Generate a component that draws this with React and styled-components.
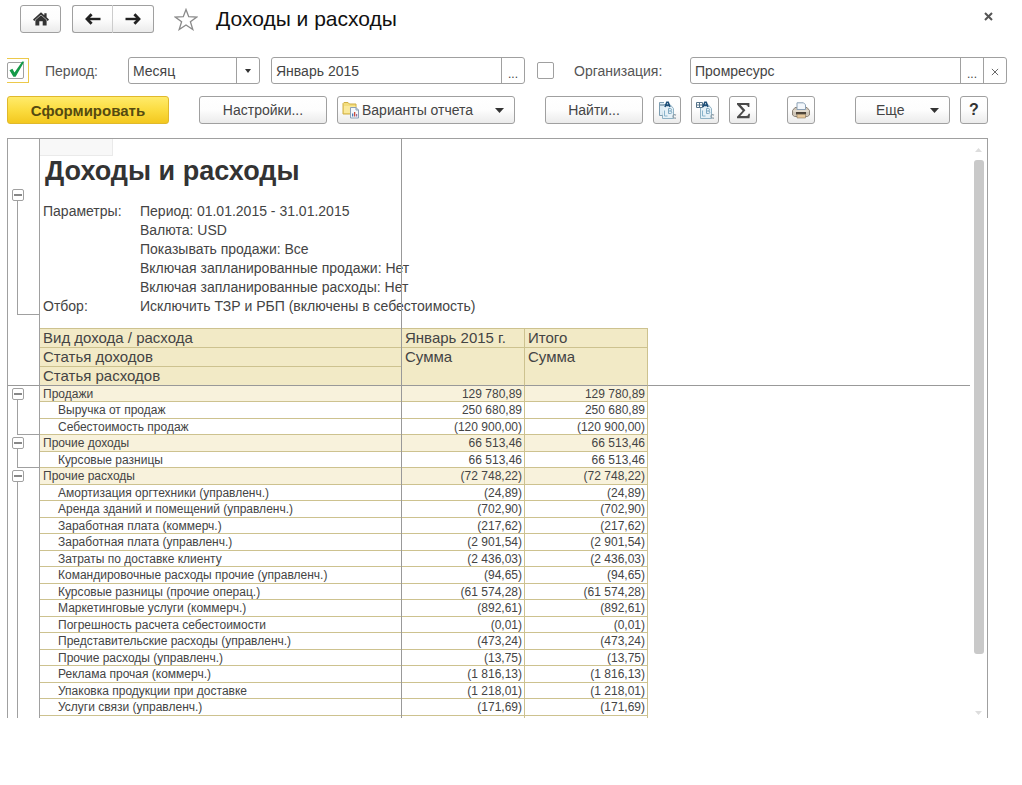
import React from "react";
import styled, { createGlobalStyle, css } from "styled-components";

const GlobalStyle = createGlobalStyle`
  *, *::before, *::after { box-sizing: border-box; }
  body {
    margin: 0;
    background: #fff;
    color: #444;
    font-family: "Liberation Sans", Arial, sans-serif;
    font-size: 14px;
  }
  button, input, select { font: inherit; color: inherit; }
`;

const LINE = "#a0a0a0";
const TAN = "#cdc28f";

const Page = styled.main`
  padding: 5px 0 0 7px;
`;

const Header = styled.header`
  display: flex;
  align-items: center;
  height: 28px;
  padding: 0 29px 0 13px;
`;

const buttonFace = css`
  border: 1px solid ${LINE};
  border-radius: 3px;
  background: linear-gradient(#fff, #fdfdfd 50%, #ebebeb);
  cursor: pointer;
`;

const NavButton = styled.button`
  ${buttonFace}
  display: flex;
  align-items: center;
  justify-content: center;
  width: 41px;
  height: 28px;
  padding: 0;
`;

const NavGroup = styled.nav`
  display: flex;
  margin: 0 20px 0 11px;
  ${NavButton}:first-child { border-radius: 3px 0 0 3px; border-right-color: #ccc; }
  ${NavButton}:last-child { border-radius: 0 3px 3px 0; border-left: 0; }
`;

const PlainButton = styled.button`
  display: flex;
  align-items: center;
  justify-content: center;
  padding: 0;
  border: 0;
  background: none;
  cursor: pointer;
`;

const CloseButton = styled(PlainButton)`
  align-self: flex-start;
  height: 22px;
`;

const Title = styled.h1`
  flex: 1;
  margin: 0 0 0 18px;
  color: #111;
  font-size: 21px;
  font-weight: 400;
  line-height: 28px;
`;

const Filters = styled.form`
  display: flex;
  align-items: center;
  height: 27px;
  margin: 24px 15px 0 0;
`;

const FocusFrame = styled.span`
  display: flex;
  align-items: center;
  width: 22px;
  height: 25px;
  border: 1px solid #ecc94b;
  border-left: 0;
`;

const CheckBox = styled.span`
  display: grid;
  width: 17px;
  height: 17px;
  flex: none;
  input {
    grid-area: 1 / 1;
    width: 17px;
    height: 17px;
    margin: 0;
    appearance: none;
    border: 1px solid ${LINE};
    border-radius: 2px;
    background: #fff;
  }
  svg {
    grid-area: 1 / 1;
    pointer-events: none;
    overflow: visible;
  }
`;

const Label = styled.label`
  width: ${(p) => p.$width}px;
  margin-left: ${(p) => p.$gap}px;
  flex: none;
  color: #555;
  white-space: nowrap;
`;

const Field = styled.div`
  display: flex;
  flex: ${(p) => p.$grow} 1 0;
  min-width: 0;
  height: 27px;
  margin-right: ${(p) => p.$after || 0}px;
  border: 1px solid ${LINE};
  border-radius: 3px;
  overflow: hidden;
  background: #fff;
  input {
    flex: 1;
    min-width: 0;
    padding: 0 4px;
    border: 0;
    outline: 0;
    background: none;
  }
`;

const FieldButton = styled.button`
  width: 23px;
  padding: ${(p) => (p.$dots ? "6px 0 0" : "3px 0 0")};
  border: 0;
  border-left: 1px solid ${LINE};
  background: none;
  font-size: 12px;
  cursor: pointer;
`;

const SelectBox = styled.div`
  display: grid;
  grid-template-columns: 1fr 23px;
  flex: none;
  width: 132px;
  height: 27px;
  margin-right: 11px;
  border: 1px solid ${LINE};
  border-radius: 3px;
  select {
    grid-area: 1 / 1 / 2 / 3;
    appearance: none;
    padding: 0 4px;
    border: 0;
    outline: 0;
    background: none;
  }
`;

const SelectArrow = styled.span`
  grid-area: 1 / 2;
  display: flex;
  align-items: center;
  justify-content: center;
  border-left: 1px solid ${LINE};
  pointer-events: none;
`;

const Toolbar = styled.div`
  display: flex;
  gap: 30px;
  margin: 12px 34px 14px 0;
`;

const ToolGroup = styled.div`
  display: flex;
  gap: 10px;
  &:last-child { margin-left: auto; }
`;

const ToolButton = styled.button`
  ${buttonFace}
  display: flex;
  align-items: center;
  justify-content: ${(p) => (p.$spread ? "space-between" : "center")};
  width: ${(p) => p.$width || 28}px;
  height: 28px;
  padding: ${(p) => (p.$spread ? `0 10px 0 ${p.$spread}px` : 0)};
  white-space: nowrap;
`;

const PrimaryButton = styled(ToolButton)`
  border-color: #e0b92c;
  background: linear-gradient(#ffeb6b, #fbdc40 50%, #f3c81f);
  color: #554a10;
  font-size: 15px;
  font-weight: 700;
`;

const IconLabel = styled.span`
  display: flex;
  align-items: center;
  gap: 2px;
`;

const HelpMark = styled.span`
  color: #333;
  font-size: 16px;
  font-weight: 700;
`;

const Sheet = styled.section`
  display: flex;
  margin-right: 34px;
  border: 1px solid ${LINE};
  border-bottom: 0;
`;

const Report = styled.div`
  position: relative;
  flex: 1;
  min-width: 0;
`;

const FreezeLine = styled.div`
  position: absolute;
  top: 0;
  bottom: 0;
  left: 393px;
  width: 1px;
  background: #999;
`;

const Intro = styled.div`
  display: grid;
  grid-template-columns: 32px 1fr;
`;

const Gutter = styled.div`
  display: flex;
  flex-direction: column;
  padding: 50px 0 13px;
  border-right: 1px solid ${LINE};
`;

const Bracket = styled.div`
  display: flex;
  flex-direction: column;
  flex: 1;
  height: ${(p) => (p.$height ? `${p.$height}px` : "auto")};
  padding-top: ${(p) => (p.$height ? 2 : 0)}px;
`;

const Toggle = styled.button`
  display: flex;
  align-items: center;
  justify-content: center;
  width: 12px;
  height: 12px;
  margin-left: 4px;
  padding: 0;
  flex: none;
  border: 1px solid ${LINE};
  border-radius: 2px;
  background: #fff;
  &::before {
    content: "";
    width: 8px;
    height: 2px;
    background: #888;
  }
`;

const Stem = styled.span`
  flex: 1;
  margin-left: 9px;
  border-left: 1px solid ${LINE};
  border-bottom: ${(p) => (p.$open ? 0 : 1)}px solid ${LINE};
`;

const IntroBody = styled.div`
  padding-bottom: 12px;
`;

const CornerCell = styled.div`
  width: 73px;
  height: 17px;
  border: solid #eaeaea;
  border-width: 0 1px 1px 0;
  background: #f8f8f8;
`;

const ReportTitle = styled.h2`
  margin: 0 0 16px 5px;
  color: #333;
  font-size: 27px;
  font-weight: 700;
  line-height: 30px;
`;

const Params = styled.dl`
  display: grid;
  grid-template-columns: 97px 1fr;
  margin: 0 0 0 3px;
  line-height: 19px;
  font-size: 14px;
  dt { grid-column: 1; }
  dd { grid-column: 2; margin: 0; white-space: nowrap; }
`;

const Table = styled.table`
  width: 100%;
  table-layout: fixed;
  border-collapse: separate;
  border-spacing: 0;
  line-height: 14px;
  td, th {
    padding: 0;
    overflow: hidden;
    text-align: left;
    vertical-align: middle;
    font-weight: 400;
    white-space: nowrap;
  }
`;

const Col = styled.col`
  width: ${(p) => (p.$width ? `${p.$width}px` : "auto")};
`;

const HeadRow = styled.tr`
  height: ${(p) => (p.$first ? 20 : 19)}px;
`;

const HeadCell = styled.th`
  && {
    padding-left: 3px;
    border: solid ${TAN};
    border-width: ${(p) => (p.$first ? 1 : 0)}px 1px 1px 0;
    border-bottom-color: ${(p) => (p.$frozen ? "#999" : TAN)};
    background: #f2eac6;
    font-size: 15px;
    line-height: 18px;
    vertical-align: top;
  }
`;

const BlankHead = styled.td`
  border-bottom: 1px solid #999;
  border-right: ${(p) => (p.$gutter ? 1 : 0)}px solid ${LINE};
`;

const GutterCell = styled.td`
  && { vertical-align: top; }
  border-right: 1px solid ${LINE};
`;

const Row = styled.tr`
  height: ${(p) => p.$height}px;
  background: ${(p) => (p.$group ? "#f8f2dc" : "#fff")};
  ${GutterCell} { background: #fff; }
`;

const NameCell = styled.td`
  && { padding-left: ${(p) => (p.$group ? 3 : 18)}px; }
  border-right: 1px solid ${TAN};
  border-bottom: 1px solid ${TAN};
  font-size: 12px;
`;

const SumCell = styled.td`
  && { padding-right: 2px; text-align: right; }
  border-right: 1px solid ${TAN};
  border-bottom: 1px solid ${TAN};
  font-size: 12px;
`;

const EdgeCell = styled.td`
  height: 2px;
  border-right: 1px solid ${TAN};
`;

const Filler = styled.td`
  background: #fff;
`;

const ScrollBar = styled.div`
  display: flex;
  flex-direction: column;
  align-items: center;
  width: 17px;
  padding: 9px 0 3px;
`;

const Thumb = styled.div`
  flex: 492 1 0;
  width: 10px;
  margin-top: 8px;
  border-radius: 3px;
  background: #c9c9c9;
`;

const Track = styled.div`
  flex: 57 1 0;
`;

const Triangle = ({ size = 9, color = "#333", up }) => (
  <svg width={size} height={size > 8 ? 5 : 4} viewBox="0 0 10 5" preserveAspectRatio="none" aria-hidden="true">
    <path d={up ? "M0 5 5 0 10 5z" : "M0 0H10L5 5z"} fill={color} />
  </svg>
);

const HomeIcon = () => (
  <svg width="16" height="14" viewBox="0 0 16 14" fill="#333" aria-hidden="true">
    <path d="M8 0.3 11.3 3.2V1.2H13.6V5.3L16 7.5 14.8 8.9 13.6 7.9V13.4H9.7V9.2H6.3V13.4H2.4V7.9L1.2 8.9 0 7.5z" />
    <path d="M2 8.2 8 3 14 8.2" fill="none" stroke="#f8f8f8" strokeWidth=".6" />
  </svg>
);

const ArrowIcon = ({ right }) => (
  <svg width="16" height="12" viewBox="0 0 16 12" aria-hidden="true">
    <g transform={right ? "matrix(-1 0 0 1 16 0)" : undefined} fill="none" stroke="#222">
      <path d="M2 6H15.5" strokeWidth="2.4" />
      <path d="M6.6 1.2 2 6l4.6 4.8" strokeWidth="2.8" />
    </g>
  </svg>
);

const StarIcon = () => (
  <svg width="24" height="23" viewBox="0 0 24 23" aria-hidden="true">
    <path
      d="M12 1.5 14.7 8.7 22.8 9 16.4 13.8 18.8 21.5 12 17 5.2 21.5 7.6 13.8 1.2 9 9.3 8.7z"
      fill="#fff"
      stroke="#8a8a8a"
      strokeWidth="1.3"
    />
  </svg>
);

const CrossIcon = ({ size = 9, width = 2 }) => (
  <svg width={size} height={size} viewBox="0 0 9 9" aria-hidden="true">
    <path d="M1 1 8 8M8 1 1 8" stroke="#555" strokeWidth={width} />
  </svg>
);

const CheckIcon = () => (
  <svg width="17" height="17" viewBox="0 0 17 17" aria-hidden="true">
    <path d="M2.5 8.2 5.4 6.8 7.5 10.4 15.2 -0.6 17.2 -0.2 8.6 14.8 6.4 14.8z" fill="#149a48" />
  </svg>
);

const FolderIcon = () => (
  <svg width="18" height="18" viewBox="0 0 18 18" aria-hidden="true">
    <path d="M1 2.5 2 1.5H6L7.5 3H14v10H1z" fill="#f3dd7c" stroke="#cfae45" />
    <path d="M2 5H13.5v7H2z" fill="#fae99b" />
    <path d="M8.5 6.5H14L16.5 9v8h-8z" fill="#f4f8fc" stroke="#8ba0b8" />
    <path d="M14 6.5V9h2.5" fill="none" stroke="#8ba0b8" />
    <path d="M10 15.5v-3h1.3v3z" fill="#4a79b5" />
    <path d="M12 15.5V11h1.3v4.5z" fill="#cc4d3e" />
    <path d="M14 15.5v-2.5h1.2v2.5z" fill="#8f6b9f" />
  </svg>
);

const GroupsIcon = ({ expanded }) => (
  <svg width="19" height="19" viewBox="0 0 19 19" aria-hidden="true">
    <path d="M4.5 3.5H12L15.5 7.5V17.5H4.5z" fill="#e6f1f7" stroke="#8fb2c5" />
    {expanded ? (
      <path d="M.5 1.5H6.5V6.5H.5zM.5 4H6.5M3.5 1.5V6.5" fill="#fff" stroke="#56748a" />
    ) : (
      <>
        <path d="M6 1.5H1.5V14.5H4.5" fill="#dfedf5" stroke="#7d9db1" />
        <path d="M2 4H6.5" stroke="#56748a" />
      </>
    )}
    <path d="M7 6 8.8 1.2h1.4L12 6M8 4.4h3" fill="none" stroke="#1f4f78" strokeWidth="1.6" />
    <path
      d="M10.5 7.5v5M10.5 7.5h1.8q1.2 0 1.2 1.2t-1.2 1.3h-1.8M12.3 10q1.5 0 1.5 1.3t-1.5 1.2h-1.8"
      fill="none"
      stroke="#7fa9c2"
    />
    <path d="M18 14.2q-2.5-1.4-3 .9t3 2" fill="none" stroke="#8e9ea8" strokeWidth="1.2" />
    <path d="M6.5 9.5v5.5h3" fill="none" stroke="#88b4cc" />
  </svg>
);

const SigmaIcon = () => (
  <svg width="15" height="17" viewBox="0 0 15 17" aria-hidden="true">
    <path
      d="M1 1H13.4V5H12Q11.8 3 9.8 3H4.6L9.4 8.3 4.3 14H10.2Q12.2 14 12.6 11.8H14L13.5 16.2H1V14.8L6.6 8.8 1 2.4z"
      fill="#4a4a4a"
    />
  </svg>
);

const PrinterIcon = () => (
  <svg width="18" height="17" viewBox="0 0 18 17" aria-hidden="true">
    <path d="M3 5.5H15L17.5 8.5V13L15.5 14.5H2.5L.5 13V8.5z" fill="#cfc6b8" stroke="#8c8378" />
    <path d="M5 7.5V.8H11.5L13.5 2.8V7.5z" fill="#f3f7fb" stroke="#8ba0b4" />
    <path d="M1.5 9H16.5" stroke="#f3ede2" />
    <path d="M4 10H14V12.5H4z" fill="#4b4238" />
    <path d="M5 12.3H13.5V16H5z" fill="#e6c79b" stroke="#8c7a60" strokeWidth=".6" />
  </svg>
);

const groups = [
  {
    rows: [
      ["Продажи", "129 780,89"],
      ["Выручка от продаж", "250 680,89"],
      ["Себестоимость продаж", "(120 900,00)"],
    ],
  },
  {
    rows: [
      ["Прочие доходы", "66 513,46"],
      ["Курсовые разницы", "66 513,46"],
    ],
  },
  {
    open: true,
    rows: [
      ["Прочие расходы", "(72 748,22)"],
      ["Амортизация оргтехники (управленч.)", "(24,89)"],
      ["Аренда зданий и помещений (управленч.)", "(702,90)"],
      ["Заработная плата (коммерч.)", "(217,62)"],
      ["Заработная плата (управленч.)", "(2 901,54)"],
      ["Затраты по доставке клиенту", "(2 436,03)"],
      ["Командировочные расходы прочие (управленч.)", "(94,65)"],
      ["Курсовые разницы (прочие операц.)", "(61 574,28)"],
      ["Маркетинговые услуги (коммерч.)", "(892,61)"],
      ["Погрешность расчета себестоимости", "(0,01)"],
      ["Представительские расходы (управленч.)", "(473,24)"],
      ["Прочие расходы (управленч.)", "(13,75)"],
      ["Реклама прочая (коммерч.)", "(1 816,13)"],
      ["Упаковка продукции при доставке", "(1 218,01)"],
      ["Услуги связи (управленч.)", "(171,69)"],
    ],
  },
];

// Rows alternate between 16 and 17 pixels, counted through the whole report.
const rowHeight = (index) => (index % 2 === 0 ? 16 : 17);

const RowGroup = ({ group, start }) => {
  const total = group.rows.reduce((sum, _, i) => sum + rowHeight(start + i), 0);
  return (
    <tbody>
      {group.rows.map(([name, sum], i) => (
        <Row key={name} $group={i === 0} $height={rowHeight(start + i)}>
          {i === 0 && (
            <GutterCell rowSpan={group.rows.length + (group.open ? 1 : 0)}>
              <Bracket $height={total + (group.open ? 2 : 0)}>
                <Toggle type="button" aria-label="Свернуть группу" />
                <Stem $open={group.open} />
              </Bracket>
            </GutterCell>
          )}
          <NameCell $group={i === 0}>{name}</NameCell>
          <SumCell>{sum}</SumCell>
          <SumCell>{sum}</SumCell>
          <Filler />
        </Row>
      ))}
      {group.open && (
        <tr>
          <EdgeCell />
          <EdgeCell />
          <EdgeCell />
          <Filler />
        </tr>
      )}
    </tbody>
  );
};

export default function App() {
  let offset = 0;
  const placed = groups.map((group) => {
    const start = offset;
    offset += group.rows.length;
    return { group, start };
  });

  return (
    <>
      <GlobalStyle />
      <Page>
        <Header>
          <NavButton type="button" aria-label="Домой"><HomeIcon /></NavButton>
          <NavGroup>
            <NavButton type="button" aria-label="Назад"><ArrowIcon /></NavButton>
            <NavButton type="button" aria-label="Вперед"><ArrowIcon right /></NavButton>
          </NavGroup>
          <PlainButton type="button" aria-label="В избранное"><StarIcon /></PlainButton>
          <Title>Доходы и расходы</Title>
          <CloseButton type="button" aria-label="Закрыть"><CrossIcon /></CloseButton>
        </Header>

        <Filters onSubmit={(e) => e.preventDefault()}>
          <FocusFrame>
            <CheckBox>
              <input id="use-period" type="checkbox" defaultChecked />
              <CheckIcon />
            </CheckBox>
          </FocusFrame>
          <Label htmlFor="use-period" $gap={16} $width={83}>Период:</Label>
          <SelectBox>
            <select aria-label="Вид периода" defaultValue="Месяц">
              <option>Месяц</option>
            </select>
            <SelectArrow><Triangle size={6} /></SelectArrow>
          </SelectBox>
          <Field $grow={4} $after={12}>
            <input aria-label="Период" defaultValue="Январь 2015" />
            <FieldButton type="button" $dots aria-label="Выбрать период">...</FieldButton>
          </Field>
          <CheckBox>
            <input id="use-org" type="checkbox" />
          </CheckBox>
          <Label htmlFor="use-org" $gap={20} $width={116}>Организация:</Label>
          <Field $grow={5}>
            <input aria-label="Организация" defaultValue="Промресурс" />
            <FieldButton type="button" $dots aria-label="Выбрать организацию">...</FieldButton>
            <FieldButton type="button" aria-label="Очистить"><CrossIcon size={8} width={1} /></FieldButton>
          </Field>
        </Filters>

        <Toolbar>
          <PrimaryButton type="button" $width={162}>Сформировать</PrimaryButton>
          <ToolGroup>
            <ToolButton type="button" $width={128}>Настройки...</ToolButton>
            <ToolButton type="button" $width={178} $spread={4}>
              <IconLabel><FolderIcon />Варианты отчета</IconLabel>
              <Triangle />
            </ToolButton>
          </ToolGroup>
          <ToolGroup>
            <ToolButton type="button" $width={98}>Найти...</ToolButton>
            <ToolButton type="button" aria-label="Свернуть группы"><GroupsIcon /></ToolButton>
            <ToolButton type="button" aria-label="Развернуть группы"><GroupsIcon expanded /></ToolButton>
            <ToolButton type="button" aria-label="Сумма"><SigmaIcon /></ToolButton>
          </ToolGroup>
          <ToolButton type="button" aria-label="Печать"><PrinterIcon /></ToolButton>
          <ToolGroup>
            <ToolButton type="button" $width={95} $spread={20}>
              Еще
              <Triangle />
            </ToolButton>
            <ToolButton type="button"><HelpMark>?</HelpMark></ToolButton>
          </ToolGroup>
        </Toolbar>

        <Sheet>
          <Report>
            <Intro>
              <Gutter>
                <Bracket>
                  <Toggle type="button" aria-label="Свернуть группу" />
                  <Stem />
                </Bracket>
              </Gutter>
              <IntroBody>
                <CornerCell />
                <ReportTitle>Доходы и расходы</ReportTitle>
                <Params>
                  <dt>Параметры:</dt>
                  <dd>Период: 01.01.2015 - 31.01.2015</dd>
                  <dd>Валюта: USD</dd>
                  <dd>Показывать продажи: Все</dd>
                  <dd>Включая запланированные продажи: Нет</dd>
                  <dd>Включая запланированные расходы: Нет</dd>
                  <dt>Отбор:</dt>
                  <dd>Исключить ТЗР и РБП (включены в себестоимость)</dd>
                </Params>
              </IntroBody>
            </Intro>
            <Table>
              <colgroup>
                <Col $width={32} />
                <Col $width={362} />
                <Col $width={123} />
                <Col $width={123} />
                <Col />
              </colgroup>
              <thead>
                <HeadRow $first>
                  <BlankHead rowSpan={3} $gutter />
                  <HeadCell $first>Вид дохода / расхода</HeadCell>
                  <HeadCell $first>Январь 2015 г.</HeadCell>
                  <HeadCell $first>Итого</HeadCell>
                  <BlankHead rowSpan={3} />
                </HeadRow>
                <HeadRow>
                  <HeadCell>Статья доходов</HeadCell>
                  <HeadCell rowSpan={2} $frozen>Сумма</HeadCell>
                  <HeadCell rowSpan={2} $frozen>Сумма</HeadCell>
                </HeadRow>
                <HeadRow>
                  <HeadCell $frozen>Статья расходов</HeadCell>
                </HeadRow>
              </thead>
              {placed.map(({ group, start }) => (
                <RowGroup key={start} group={group} start={start} />
              ))}
            </Table>
            <FreezeLine />
          </Report>
          <ScrollBar>
            <Triangle size={7} color="#ddd" up />
            <Thumb />
            <Track />
            <Triangle size={7} color="#ddd" />
          </ScrollBar>
        </Sheet>
      </Page>
    </>
  );
}
